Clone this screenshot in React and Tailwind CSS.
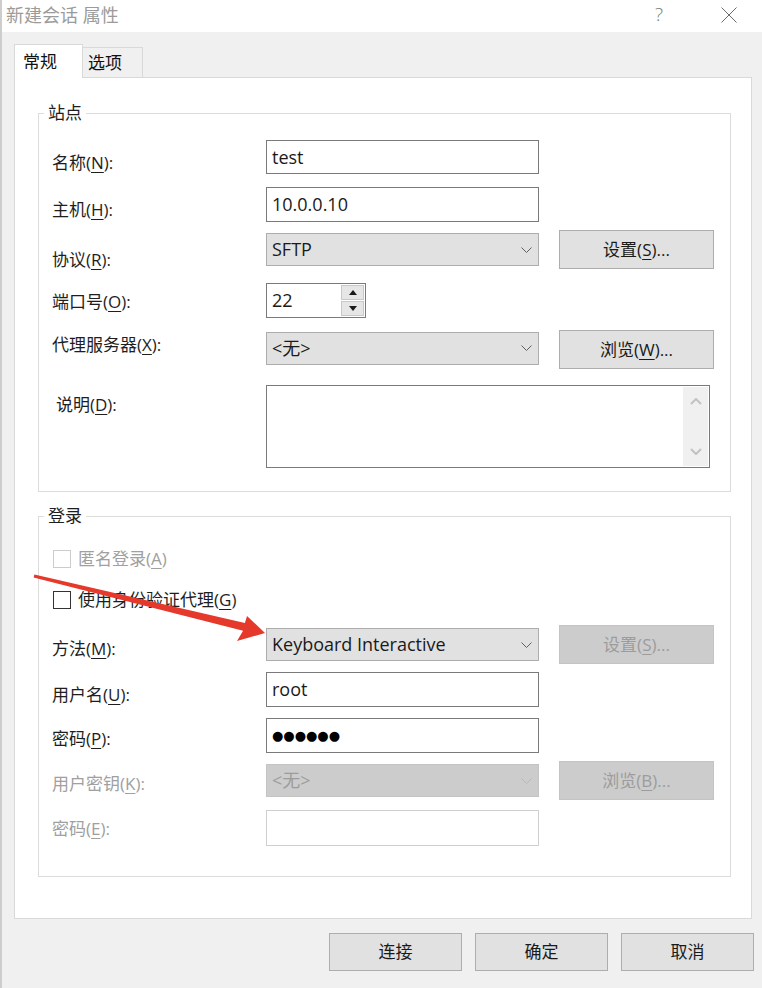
import React from 'react';

const K = ({ children }) => <span className="underline underline-offset-[3px] decoration-1">{children}</span>;

const Chevron = ({ disabled }) => (
  <svg width="11" height="6" viewBox="0 0 11 6" className="shrink-0">
    <path d="M0.5 0.5 L5.5 5.5 L10.5 0.5" fill="none" stroke={disabled ? '#b8b8b8' : '#606060'} strokeWidth="1" />
  </svg>
);

const Label = ({ children, className = '', disabled }) => (
  <div className={`w-[214px] shrink-0 self-start leading-[20px] ${disabled ? 'text-[#a0a0a0]' : 'text-[#1e1e1e]'} ${className}`}>
    {children}
  </div>
);

const TextBox = ({ children, className = '', disabled }) => (
  <div
    className={`w-[273px] shrink-0 bg-white flex items-center pl-[5px] text-[18px] text-[#1a1a1a] border ${
      disabled ? 'border-[#cfcfcf]' : 'border-[#7a7a7a]'
    } ${className}`}
  >
    {children}
  </div>
);

const Select = ({ value, disabled, className = '' }) => (
  <div
    className={`w-[273px] h-[33px] shrink-0 flex items-center pl-[5px] pr-[6px] text-[18px] border ${
      disabled ? 'bg-[#cccccc] border-[#c4c4c4] text-[#9c9c9c]' : 'bg-[#e1e1e1] border-[#adadad] text-[#1a1a1a]'
    } ${className}`}
  >
    <span className="flex-1">{value}</span>
    <Chevron disabled={disabled} />
  </div>
);

const Button = ({ children, disabled, className = '' }) => (
  <div
    className={`flex items-center justify-center shrink-0 border ${
      disabled ? 'bg-[#cccccc] border-[#c4c4c4] text-[#9c9c9c]' : 'bg-[#e1e1e1] border-[#adadad] text-[#1a1a1a]'
    } ${className}`}
  >
    {children}
  </div>
);

const CheckBox = ({ disabled, children }) => (
  <div className="flex items-center h-[20px] ml-[1px]">
    <div className={`w-[18px] h-[18px] bg-white border ${disabled ? 'border-[#cccccc]' : 'border-[#333333]'}`} />
    <span className={`ml-[7px] leading-[20px] ${disabled ? 'text-[#a0a0a0]' : 'text-[#1e1e1e]'}`}>{children}</span>
  </div>
);

export default function App() {
  return (
    <div className="relative w-[762px] h-[988px] overflow-hidden bg-[#f0f0f0] border-l-[2px] border-[#cdcdcd] font-[family-name:Open_Sans,Noto_Sans_CJK_SC,sans-serif] text-[17px]">
      {/* title bar */}
      <div className="h-[32px] bg-white flex items-center pl-[4px]">
        <span className="text-[18px] leading-none text-[#9b9b9b] -mt-[3px]">新建会话 属性</span>
        <span className="ml-auto text-[19px] leading-none text-[#7a7a7a] font-light -mt-[3px]">?</span>
        <svg width="16" height="16" viewBox="0 0 16 16" className="ml-[58px] mr-[25px] -mt-[3px]">
          <path d="M0.5 0.5 L15.5 15.5 M15.5 0.5 L0.5 15.5" stroke="#6a6a6a" strokeWidth="1" />
        </svg>
      </div>

      <div className="pl-[12px] pt-[12px]">
        {/* tabs */}
        <div className="flex items-end h-[33px]">
          <div className="relative z-10 w-[69px] h-[34px] -mb-px bg-white border border-b-0 border-[#d9d9d9] pl-[8px] flex items-center text-[#111]">
            常规
          </div>
          <div className="w-[60px] h-[30px] bg-[#f0f0f0] border border-l-0 border-b-0 border-[#d9d9d9] pl-[5px] flex items-center text-[#111]">
            选项
          </div>
        </div>

        {/* panel */}
        <div className="w-[738px] bg-white border border-[#d9d9d9] pl-[23px] pb-[41px]">
          <fieldset className="w-[693px] mt-[25px] border border-[#dcdcdc]">
            <legend className="ml-[5px] px-[4px] leading-[20px] text-[#1e1e1e]">站点</legend>
            <div className="pl-[13px] pb-[23px]">
              <div className="flex items-center h-[34px] mt-[17px]">
                <Label className="mt-[13px]">名称(<K>N</K>):</Label>
                <TextBox className="h-[34px]">test</TextBox>
              </div>
              <div className="flex items-center h-[35px] mt-[13px]">
                <Label className="mt-[13px]">主机(<K>H</K>):</Label>
                <TextBox className="h-[35px]">10.0.0.10</TextBox>
              </div>
              <div className="flex items-center h-[39px] mt-[8px]">
                <Label className="mt-[20px]">协议(<K>R</K>):</Label>
                <Select value="SFTP" />
                <Button className="w-[155px] h-[39px] ml-[20px]">设置(<K>S</K>)...</Button>
              </div>
              <div className="flex items-center h-[35px] mt-[14px]">
                <Label className="mt-[9px]">端口号(<K>O</K>):</Label>
                <div className="flex h-[35px] border border-[#7a7a7a] bg-white">
                  <div className="w-[73px] flex items-center pl-[5px] text-[18px] text-[#1a1a1a]">22</div>
                  <div className="w-[25px] flex flex-col gap-[1px] p-[1px] bg-white">
                    <div className="flex-1 bg-[#e6e6e6] border border-[#c8c8c8] flex items-center justify-center">
                      <svg width="8" height="5" viewBox="0 0 8 5"><path d="M0 5 L4 0 L8 5 Z" fill="#1a1a1a" /></svg>
                    </div>
                    <div className="flex-1 bg-[#e6e6e6] border border-[#c8c8c8] flex items-center justify-center">
                      <svg width="8" height="5" viewBox="0 0 8 5"><path d="M0 0 L8 0 L4 5 Z" fill="#1a1a1a" /></svg>
                    </div>
                  </div>
                </div>
              </div>
              <div className="flex items-center h-[39px] mt-[12px]">
                <Label className="mt-[5px]">代理服务器(<K>X</K>):</Label>
                <Select value="<无>" className="-mt-[3px]" />
                <Button className="w-[155px] h-[39px] ml-[20px]">浏览(<K>W</K>)...</Button>
              </div>
              <div className="flex items-start h-[83px] mt-[16px]">
                <Label className="mt-[10px] pl-[4px]">说明(<K>D</K>):</Label>
                <div className="w-[444px] h-[83px] border border-[#7a7a7a] bg-white flex justify-end p-[1px]">
                  <div className="w-[25px] h-full bg-[#f0f0f0] flex flex-col items-center justify-between py-[11px]">
                    <svg width="12" height="7" viewBox="0 0 12 7"><path d="M1 6 L6 1 L11 6" fill="none" stroke="#c2c2c2" strokeWidth="2" /></svg>
                    <svg width="12" height="7" viewBox="0 0 12 7"><path d="M1 1 L6 6 L11 1" fill="none" stroke="#c2c2c2" strokeWidth="2" /></svg>
                  </div>
                </div>
              </div>
            </div>
          </fieldset>

          <fieldset className="w-[693px] mt-[14px] border border-[#dcdcdc]">
            <legend className="ml-[5px] px-[4px] leading-[20px] text-[#1e1e1e]">登录</legend>
            <div className="pl-[13px] pb-[30px]">
              <div className="mt-[23px]">
                <CheckBox disabled>匿名登录(<K>A</K>)</CheckBox>
              </div>
              <div className="mt-[21px]">
                <CheckBox>使用身份验证代理(<K>G</K>)</CheckBox>
              </div>
              <div className="flex items-center h-[39px] mt-[15px]">
                <Label className="mt-[14px]">方法(<K>M</K>):</Label>
                <Select value="Keyboard Interactive" />
                <Button disabled className="w-[155px] h-[39px] ml-[20px]">设置(<K>S</K>)...</Button>
              </div>
              <div className="flex items-center h-[35px] mt-[8px]">
                <Label className="mt-[13px]">用户名(<K>U</K>):</Label>
                <TextBox className="h-[35px]">root</TextBox>
              </div>
              <div className="flex items-center h-[35px] mt-[11px]">
                <Label className="mt-[11px]">密码(<K>P</K>):</Label>
                <TextBox className="h-[35px]">
                  <span className="font-[family-name:DejaVu_Sans,sans-serif] text-[13px] text-black">●●●●●●</span>
                </TextBox>
              </div>
              <div className="flex items-center h-[39px] mt-[8px]">
                <Label disabled className="mt-[13px]">用户密钥(<K>K</K>):</Label>
                <Select disabled value="<无>" />
                <Button disabled className="w-[155px] h-[39px] ml-[20px]">浏览(<K>B</K>)...</Button>
              </div>
              <div className="flex items-center h-[36px] mt-[10px]">
                <Label disabled className="mt-[9px]">密码(<K>E</K>):</Label>
                <TextBox disabled className="h-[36px]" />
              </div>
            </div>
          </fieldset>
        </div>

        {/* footer buttons */}
        <div className="flex justify-end gap-[13px] pr-[8px] mt-[14px]">
          <Button className="w-[133px] h-[38px]">连接</Button>
          <Button className="w-[133px] h-[38px]">确定</Button>
          <Button className="w-[133px] h-[38px]">取消</Button>
        </div>
      </div>

      {/* red annotation arrow */}
      <svg width="762" height="988" viewBox="0 0 762 988" className="absolute top-0 -left-[2px] pointer-events-none">
        <polygon
          points="34.4,574.5 244.9,622.9 247,616 265,633 237,641 243.1,630.7 33.6,577.5"
          fill="#e5392b"
        />
      </svg>
    </div>
  );
}
